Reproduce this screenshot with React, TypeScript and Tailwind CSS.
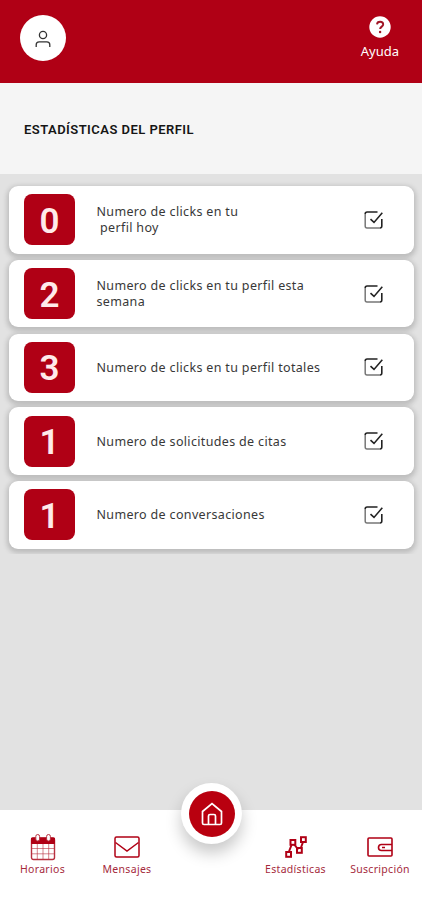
import type { ReactNode } from 'react'

interface Stat {
  value: number
  label: string
}

// line breaks and leading spaces in a label are kept as they come
const stats: Stat[] = [
  { value: 0, label: 'Numero de clicks en tu\n perfil hoy' },
  { value: 2, label: 'Numero de clicks en tu perfil esta\nsemana' },
  { value: 3, label: 'Numero de clicks en tu perfil totales' },
  { value: 1, label: 'Numero de solicitudes de citas' },
  { value: 1, label: 'Numero de conversaciones' },
]

function CheckIcon() {
  return (
    <svg width="20" height="20" viewBox="0 0 20 20" fill="none">
      <path d="M3 18c-1.200 0-1.800-.8-1.800-2V4M3 18h13" stroke="#777" strokeWidth="1.500" />
      <path d="M13.500 2H3.200C2 2 1.200 2.800 1.200 4M16 18c1.200 0 1.800-.8 1.800-2V9" stroke="#222" strokeWidth="1.600" />
      <path d="M6.500 9.200 10 12.400 18.300 2.800" stroke="#222" strokeWidth="1.600" />
    </svg>
  )
}

function StatCard({ stat }: { stat: Stat }) {
  return (
    <div className="flex h-[67.5px] shrink-0 items-center rounded-[9px] bg-white pl-[15px] pr-[30px] shadow-[0_2px_5px_2px_rgba(0,0,0,0.17)]">
      <div className="flex h-[51px] w-[51px] items-center justify-center rounded-[8px] bg-[#b00015] pt-[3px] font-['Roboto',sans-serif] text-[35px] font-semibold leading-none text-[#ffeaea]">
        {stat.value}
      </div>
      <p className="ml-[21.5px] flex-1 whitespace-pre pt-px text-[12.5px] leading-4 tracking-[0.34px] text-[#383838]">
        {stat.label}
      </p>
      <CheckIcon />
    </div>
  )
}

function NavItem({
  label,
  className,
  children,
}: {
  label: string
  className?: string
  children: ReactNode
}) {
  return (
    <div className={`flex flex-col items-center ${className ?? ''}`}>
      <div className="flex h-[28px] items-center">{children}</div>
      <span className="mt-px whitespace-nowrap text-[10.5px] leading-[14px] tracking-[0.3px] text-[#a52a3c]">
        {label}
      </span>
    </div>
  )
}

function CalendarIcon() {
  return (
    <svg width="26" height="28" viewBox="0 0 26 28" fill="none" stroke="#b8303f">
      <rect x="1.500" y="5" width="23" height="21.500" rx="2" strokeWidth="1.400" />
      <path d="M1.500 5h23v5.500h-23z" fill="#b00015" stroke="#b00015" />
      <path d="M2 15.500h22M2 20.800h22M7.300 11v15M13 11v15M18.700 11v15" opacity=".6" />
      <rect x="5.800" y="1.500" width="3.800" height="6.500" rx="1.900" fill="#fff" />
      <rect x="16.600" y="1.500" width="3.800" height="6.500" rx="1.900" fill="#fff" />
    </svg>
  )
}

function MailIcon() {
  return (
    <svg width="26" height="22" viewBox="0 0 26 22" fill="none" stroke="#b00015" strokeWidth="1.500">
      <rect x="1" y="1" width="24" height="20" rx="1.500" />
      <path d="m1.500 6.500 11.500 8.500 11.500-8.500" />
    </svg>
  )
}

function ChartIcon() {
  return (
    <svg width="22" height="22" viewBox="0 0 22 22" fill="none" stroke="#b00015" strokeWidth="2">
      <path d="M4 15.500 6.500 9M9.200 8.500l4 5M15.500 13 18 6" />
      <rect x="1.200" y="16" width="4.800" height="4.800" />
      <rect x="5.500" y="4" width="4.800" height="4.800" />
      <rect x="12" y="12" width="4.800" height="4.800" />
      <rect x="16" y="1.200" width="4.800" height="4.800" />
    </svg>
  )
}

function WalletIcon() {
  return (
    <svg width="26" height="20" viewBox="0 0 26 20" fill="none" stroke="#b00015" strokeWidth="1.600">
      <rect x="1" y="1" width="24" height="18" rx="1" />
      <path d="M25 7.500H14.500a3 3 0 0 0 0 6H25M15 10.500h3" />
    </svg>
  )
}

export default function App() {
  return (
    <div className="flex h-[900px] w-[422px] flex-col overflow-hidden bg-[#e2e2e2] font-['Noto_Sans',sans-serif]">
      <header className="flex h-[83px] shrink-0 items-start justify-between bg-[#b00015] pl-5 pr-[23px] pt-[15px]">
        <div className="flex h-[46px] w-[46px] items-center justify-center rounded-full bg-white pt-px">
          <svg width="16" height="18" viewBox="0 0 16 18" fill="none" stroke="#333" strokeWidth="1.300">
            <circle cx="8" cy="5" r="3.600" />
            <path d="M1.200 17v-2.200c0-1.800 1.200-3 3-3h7.600c1.800 0 3 1.200 3 3V17" />
          </svg>
        </div>
        <div className="flex flex-col items-center pt-px text-white">
          <svg width="22" height="22" viewBox="0 0 22 22" fill="none">
            <circle cx="11" cy="11" r="10.700" fill="#fff" />
            <path
              d="M8 8.300c.3-3.400 6.200-3.300 6.200.2 0 2.100-3.100 2.200-3.100 4.600"
              stroke="#a01525"
              strokeWidth="1.900"
            />
            <circle cx="11.100" cy="16" r="1.200" fill="#a01525" />
          </svg>
          <span className="mt-[5px] text-[13px] leading-[17px]">Ayuda</span>
        </div>
      </header>

      <div className="flex h-[91px] shrink-0 items-center bg-[#f5f5f5] pl-6 pt-0.5">
        <h1 className="whitespace-nowrap font-['Roboto',sans-serif] text-[13px] font-semibold tracking-[0.46px] text-[#151515]">
          ESTADÍSTICAS DEL PERFIL
        </h1>
      </div>

      <main className="flex h-[380px] shrink-0 flex-col gap-[6.3px] overflow-hidden pl-[9px] pr-2 pt-3">
        {stats.map((stat) => (
          <StatCard key={stat.label} stat={stat} />
        ))}
      </main>

      <nav className="relative mt-auto flex h-[90px] shrink-0 bg-white pt-[23px]">
        <NavItem label="Horarios" className="w-[85px]">
          <CalendarIcon />
        </NavItem>
        <NavItem label="Mensajes" className="w-[84px]">
          <MailIcon />
        </NavItem>
        <NavItem label="Estadísticas" className="ml-[84px] w-[85px]">
          <ChartIcon />
        </NavItem>
        <NavItem label="Suscripción" className="w-[84px]">
          <WalletIcon />
        </NavItem>
        <div className="absolute -top-[27px] left-[181px] flex h-[61px] w-[61px] items-center justify-center rounded-full bg-white shadow-[0_9px_16px_rgba(0,0,0,0.22)]">
          <div className="flex h-[46px] w-[46px] items-center justify-center rounded-full bg-[#b9000f]">
            <svg width="22" height="24" viewBox="0 0 22 24" fill="none" stroke="#fff" strokeWidth="1.700">
              <path d="M1.500 9.500 11 1.500l9.500 8v11.500c0 1-.6 1.500-1.500 1.500H3c-.9 0-1.500-.5-1.500-1.500z" />
              <path d="M7.500 22.500v-8.500c0-1 .5-1.500 1.500-1.500h4c1 0 1.500.5 1.500 1.500v8.500" />
            </svg>
          </div>
        </div>
      </nav>
    </div>
  )
}
